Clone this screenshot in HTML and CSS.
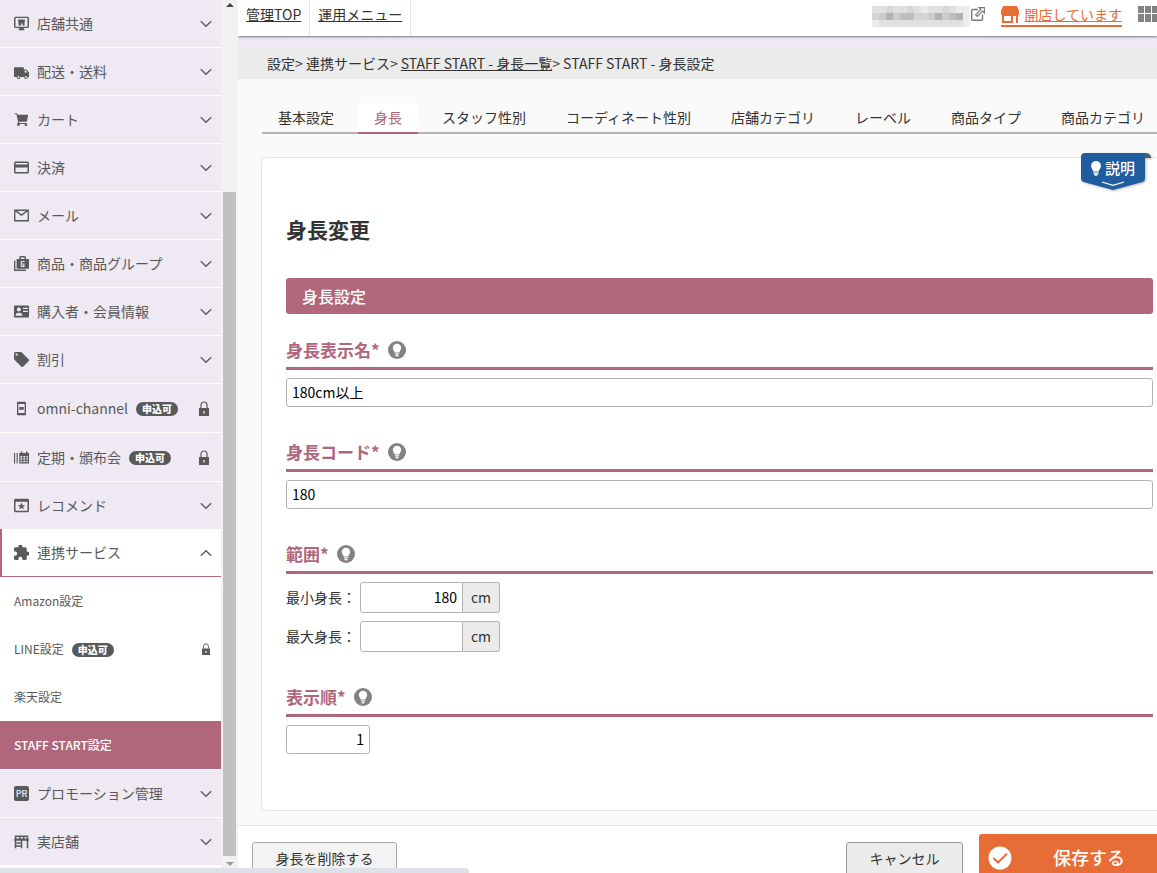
FILE: index.html
```html
<!DOCTYPE html>
<html lang="ja">
<head>
<meta charset="utf-8">
<title>STAFF START - 身長設定</title>
<link rel="stylesheet" href="styles.css">
</head>
<body>
<svg class="defs" aria-hidden="true">
  <symbol id="down" viewBox="0 0 12 8"><path d="M.8 1.2 6 6.3l5.200-5.100" fill="none" stroke="currentColor" stroke-width="1.300"/></symbol>
  <symbol id="up" viewBox="0 0 12 8"><path d="M.8 6.800 6 1.700l5.200 5.100" fill="none" stroke="currentColor" stroke-width="1.300"/></symbol>
  <symbol id="lock" viewBox="0 0 10 15"><path d="M2 7V4a3 3 0 0 1 6 0v3" fill="none" stroke="currentColor" stroke-width="1.200"/><path fill="currentColor" fill-rule="evenodd" d="M0 7h10v8H0zM4.300 10v2.500h1.400V10z"/></symbol>
  <symbol id="bulb" viewBox="0 0 18 18"><circle cx="9" cy="9" r="9" fill="#828282"/><path fill="#fff" d="M9 2.800a4.200 4.200 0 0 0-4.200 4.200c0 2 1.600 2.800 1.900 4.600h4.600c.3-1.800 1.900-2.600 1.900-4.600A4.200 4.200 0 0 0 9 2.800zM6.900 12.200h4.200v1H6.900zM7.400 13.800h3.200v.7L9.700 15.500H8.300l-.9-1z"/></symbol>
</svg>
<div class="app">
  <nav class="sidebar" aria-label="設定メニュー">
    <button class="item"><svg class="icon" viewBox="2 2 20 20"><path fill="currentColor" fill-rule="evenodd" d="M4 3h16q2 0 2 2v11q0 2-2 2h-5v1.500h1V21H8v-1.500h1V18H4q-2 0-2-2V5q0-2 2-2zm0 1.800v11.400h16V4.800zM7.500 6.500h9V10H16v4.500h-2.500V12h-2v2.500H8V10h-.5z"/></svg><span class="name">店舗共通</span><svg class="chev"><use href="#down"/></svg></button>
    <button class="item"><svg class="icon low" viewBox="2 2 20 20"><path fill="currentColor" fill-rule="evenodd" d="M3 5h12v3h3.500L22 12v6h-1.500a2.500 2.500 0 0 1-5 0h-5a2.500 2.500 0 0 1-5 0H2V6q0-1 1-1zm13 4.500V12h4l-2-2.500zM8 16.800a1.200 1.200 0 1 0 0 2.400 1.200 1.200 0 0 0 0-2.400zm10 0a1.200 1.200 0 1 0 0 2.400 1.200 1.200 0 0 0 0-2.400z"/></svg><span class="name">配送・送料</span><svg class="chev"><use href="#down"/></svg></button>
    <button class="item"><svg class="icon" viewBox="2 2 20 20"><path fill="currentColor" d="M3 3.500h3l1 2h14l-2 9.500H9l-.5 1.500H19V18H6.500l1-3L5.200 5H3z"/><circle cx="8" cy="19" r="1.800" fill="currentColor"/><circle cx="18" cy="19" r="1.800" fill="currentColor"/></svg><span class="name">カート</span><svg class="chev"><use href="#down"/></svg></button>
    <button class="item"><svg class="icon" viewBox="2 2 20 20"><path fill="currentColor" fill-rule="evenodd" d="M4 4h16q2 0 2 2v12q0 2-2 2H4q-2 0-2-2V6q0-2 2-2zm0 2v2h16V6zm0 6v6h16v-6z"/></svg><span class="name">決済</span><svg class="chev"><use href="#down"/></svg></button>
    <button class="item"><svg class="icon" viewBox="2 2 20 20"><path fill="none" stroke="currentColor" stroke-width="1.800" d="M3 5h18v14H3zM4 5.500l8 6 8-6"/></svg><span class="name">メール</span><svg class="chev"><use href="#down"/></svg></button>
    <button class="item"><svg class="icon" viewBox="2 2 20 20"><path fill="currentColor" fill-rule="evenodd" d="M2 8h1.800v12H18v2H2zM5.500 6H9V4q0-2 2-2h5q2 0 2 2v2h4v13H5.500zM11 4v2h5V4zm1 4.500q-1 0-1 1v6q0 1 1 1h4V12h-3v1.300h1.500V15h-2v-5H16V8.500z"/></svg><span class="name">商品・商品グループ</span><svg class="chev"><use href="#down"/></svg></button>
    <button class="item"><svg class="icon" viewBox="2 2 20 20"><path fill="currentColor" fill-rule="evenodd" d="M3 4h18q1 0 1 1v14q0 1-1 1H3q-1 0-1-1V5q0-1 1-1zm5.500 2.500a2.700 2.700 0 1 0 0 5.400 2.700 2.700 0 0 0 0-5.400zM4 17.500h9.500q-.5-4-5-4t-4.500 4zM14 7v1.500h6.500V7zm0 4v1.500h6.500V11z"/></svg><span class="name">購入者・会員情報</span><svg class="chev"><use href="#down"/></svg></button>
    <button class="item"><svg class="icon" viewBox="2 2 20 20"><path fill="currentColor" fill-rule="evenodd" d="M21.400 11.600l-9-9C12 2.200 11.500 2 11 2H4a2 2 0 0 0-2 2v7c0 .5.2 1 .6 1.400l9 9a2 2 0 0 0 2.800 0l7-7a2 2 0 0 0 0-2.800zM5.500 7a1.500 1.500 0 1 1 0-3 1.500 1.500 0 0 1 0 3z"/></svg><span class="name">割引</span><svg class="chev"><use href="#down"/></svg></button>
    <button class="item locked"><svg class="icon" viewBox="2 2 20 20"><path fill="currentColor" fill-rule="evenodd" d="M7 3h10q1 0 1 1v16q0 1-1 1H7q-1 0-1-1V4q0-1 1-1zm.8 3v12h8.400V6zM9 10h6v3.500H9z"/></svg><span class="name">omni-channel</span><span class="tag">申込可</span><svg class="lock"><use href="#lock"/></svg></button>
    <button class="item locked"><svg class="icon" viewBox="2 2 20 20"><path fill="currentColor" fill-rule="evenodd" d="M2 6h1.500v14H2zM5.500 6H7v14H5.500zM9 6h2V4h2v2h5V4h2v2h2v14H9zm1.500 4v2H13v-2zm4 0v2H17v-2zm4 0v2h2v-2zm-8 3v2H13v-2zm4 0v2H17v-2zm4 0v2h2v-2zm-8 3.200v2H13v-2zm4 0v2H17v-2zm4 0v2h2v-2z"/></svg><span class="name">定期・頒布会</span><span class="tag">申込可</span><svg class="lock"><use href="#lock"/></svg></button>
    <button class="item flat"><svg class="icon" viewBox="2 2 20 20"><path fill="currentColor" fill-rule="evenodd" d="M4 3h16q2 0 2 2v14q0 2-2 2H4q-2 0-2-2V5q0-2 2-2zm0 4v12h16V7zm8 1l1.300 3.300 3.500.2-2.700 2.200.9 3.400-3-1.900-3 1.900.9-3.400-2.700-2.200 3.500-.2z"/></svg><span class="name">レコメンド</span><svg class="chev"><use href="#down"/></svg></button>
    <button class="item open" aria-expanded="true"><svg class="icon" viewBox="2 2 20 20"><path fill="currentColor" d="M20.500 11H19V7a2 2 0 0 0-2-2h-4V3.500a2.500 2.500 0 0 0-5 0V5H4a2 2 0 0 0-2 2v3.800h1.500a2.700 2.700 0 0 1 0 5.400H2V20a2 2 0 0 0 2 2h3.800v-1.500a2.700 2.700 0 0 1 5.400 0V22H17a2 2 0 0 0 2-2v-4h1.500a2.500 2.500 0 0 0 0-5z"/></svg><span class="name">連携サービス</span><svg class="chev"><use href="#up"/></svg></button>
    <a class="sub" href="#">Amazon設定</a>
    <a class="sub" href="#">LINE設定<span class="tag">申込可</span><svg class="lock small"><use href="#lock"/></svg></a>
    <a class="sub" href="#">楽天設定</a>
    <a class="sub current" href="#" aria-current="page">STAFF START設定</a>
    <button class="item first"><span class="icon pr">PR</span><span class="name">プロモーション管理</span><svg class="chev"><use href="#down"/></svg></button>
    <button class="item"><svg class="icon" viewBox="2 2 20 20"><path fill="currentColor" fill-rule="evenodd" d="M3 4h18v5h1v2h-1v10h-2V11h-6v10h-2v-2H5v2H3V11H2V9h1zm2 2v2h4V6zm6 0v2h3V6zm5 0v2h3V6zM5 11v6h6v-6z"/><path fill="currentColor" d="M5 13h6v2H5z"/></svg><span class="name">実店舗</span><svg class="chev"><use href="#down"/></svg></button>
  </nav>
  <div class="track" aria-hidden="true"><i class="arrow-up"></i><i class="thumb"></i><i class="arrow-down"></i></div>
  <main class="main">
    <header class="top">
      <nav class="links"><a href="#">管理TOP</a><a href="#">運用メニュー</a></nav>
      <div class="tools">
        <svg class="mask" viewBox="0 0 98 21" shape-rendering="crispEdges"><path fill="#e0e0e0" d="M0 0h98v21H0z"/><path fill="#ececec" d="M91 0h7v21h-7zM0 14h7v7H0zM49 0h7v7h-7zM84 0h7v7h-7z"/><path fill="#d7d7d7" d="M14 0h7v7h-7zM35 0h7v7h-7zM70 0h7v7h-7z"/><path fill="#ccc" d="M0 7h91v7H0z"/><path fill="#d5d5d5" d="M42 7h14v7H42zM0 7h7v7H0z"/><path fill="#bebebe" d="M28 7h14v7H28zM77 7h7v7h-7z"/><path fill="#b2b2b2" d="M14 7h7v7h-7zM63 7h7v7h-7zM84 7h7v7h-7z"/></svg>
        <svg class="ext" viewBox="0 0 14 14"><path d="M7 2.500H1.700q-1 0-1 1v8.800q0 1 1 1h8.800q1 0 1-1V7.500" fill="none" stroke="#777" stroke-width="1.400"/><path d="M8 .6h5.400V6l-1.900-1.900-5.300 5.300-1.600-1.600 5.300-5.300z" fill="#fff" stroke="#777" stroke-width="1.100"/></svg>
        <a class="shop" href="#"><svg viewBox="0 0 18 17"><path fill="currentColor" fill-rule="evenodd" d="M2 0h14l2 5v3.500l-1 1V17h-2V10h-3v7H1V9.500l-1-1V5zM3 10v5h7v-5z"/></svg><span>開店しています</span></a>
        <svg class="apps" viewBox="0 0 19 16"><path fill="#828282" d="M0 0h6v7H0zM7 0h6v7H7zM14 0h5v7h-5zM0 8h6v8H0zM7 8h6v8H7zM14 8h5v8h-5z"/></svg>
      </div>
    </header>
    <nav class="crumbs" aria-label="パンくず">設定&gt; 連携サービス&gt; <a href="#">STAFF START - 身長一覧</a>&gt; STAFF START - 身長設定</nav>
    <nav class="tabs"><a href="#">基本設定</a><a class="on" href="#">身長</a><a href="#">スタッフ性別</a><a href="#">コーディネート性別</a><a href="#">店舗カテゴリ</a><a href="#">レーベル</a><a href="#">商品タイプ</a><a href="#">商品カテゴリ</a></nav>
    <section class="card">
      <button class="help">
        <svg class="help-bg" viewBox="0 0 72 40"><path fill="#595959" d="M62 0h4q4 1 4 5h-8z"/><path fill="#205ca0" d="M4 0h60v26q0 2-2.500 3L32 37 2.500 29Q0 28 0 26V4q0-4 4-4z"/><path d="M21 29l11 3.300L43 29" fill="none" stroke="#fff" stroke-width="1.300"/></svg>
        <svg class="help-bulb" viewBox="0 0 10 15"><path fill="#fff" d="M5 0a5 5 0 0 0-5 5c0 2.200 2 3.200 2.200 5.500h5.600C8 8.200 10 7.200 10 5a5 5 0 0 0-5-5z"/><path fill="#c8d8ea" d="M2.500 11h5v2L6 15H4l-1.500-2z"/></svg><span>説明</span>
      </button>
      <h1>身長変更</h1>
      <h2>身長設定</h2>
      <div class="field"><h3><label for="name">身長表示名*</label><svg><use href="#bulb"/></svg></h3><input id="name" type="text" value="180cm以上"></div>
      <div class="field"><h3><label for="code">身長コード*</label><svg><use href="#bulb"/></svg></h3><input id="code" type="text" value="180"></div>
      <div class="field"><h3>範囲*<svg><use href="#bulb"/></svg></h3>
        <div class="range"><label for="min">最小身長：</label><input id="min" type="text" value="180"><span>cm</span></div>
        <div class="range"><label for="max">最大身長：</label><input id="max" type="text" value=""><span>cm</span></div>
      </div>
      <div class="field"><h3><label for="order">表示順*</label><svg><use href="#bulb"/></svg></h3><input class="short" id="order" type="text" value="1"></div>
    </section>
    <footer class="actions">
      <button class="delete">身長を削除する</button>
      <button class="cancel">キャンセル</button>
      <button class="save"><svg viewBox="0 0 24 24"><circle cx="12" cy="12" r="11.500" fill="#fff"/><path d="M5.500 12l4.500 4.500 9-9" fill="none" stroke="#e76c35" stroke-width="2"/></svg><span>保存する</span></button>
    </footer>
  </main>
</div>
<div class="status" aria-hidden="true"></div>
</body>
</html>
```
FILE: styles.css
```css
* { box-sizing: border-box; }
body {
  margin: 0;
  height: 100vh;
  overflow: hidden;
  background: #fafafa;
  color: #333;
  font: 14px/20px "Noto Sans CJK JP", sans-serif;
}
a { color: inherit; }
button, input { font: inherit; color: inherit; }
svg { display: block; flex: none; }
.defs { position: absolute; width: 0; height: 0; }
.app { display: grid; grid-template-columns: 221px 17px minmax(0, 1fr); height: 100vh; }

.sidebar { display: flex; flex-direction: column; overflow: hidden; background: #fff; color: #595959; }
.item {
  display: flex;
  flex: none;
  align-items: center;
  height: 48px;
  padding: 0 9px 0 14px;
  border: 0;
  border-bottom: 1px solid #fff;
  background: #eee9f3;
  text-align: left;
}
.icon { width: 15px; height: 15px; margin-right: 8px; }
.low { margin-top: 2px; }
.name { padding-bottom: 1px; }
.pr { border-radius: 2px; background: #595959; color: #eee9f3; font-size: 9px; font-weight: 500; line-height: 15px; text-align: center; }
.chev { width: 12px; height: 8px; margin-left: auto; }
.locked { height: 49px; padding-right: 12px; }
.flat { height: 47px; border-bottom: 0; }
.first { height: 49px; border-top: 1px solid #fff; }
.open { padding-left: 12px; border-left: 2px solid #b0677b; border-bottom-color: #b0677b; background: #fff; }
.tag {
  width: 42px;
  margin: 2px 0 0 8px;
  border-radius: 7px;
  background: #595959;
  color: #fff;
  font-size: 10px;
  font-weight: 900;
  line-height: 14px;
  text-align: center;
}
.lock { width: 10px; height: 15px; margin-left: auto; }
.small { width: 8px; height: 12px; }
.sub {
  display: flex;
  flex: none;
  align-items: center;
  height: 48px;
  padding: 0 11px 0 14px;
  font-size: 12px;
  text-decoration: none;
}
.current { background: #b0677b; color: #fff; font-weight: 500; }

.track { display: flex; flex-direction: column; align-items: center; padding: 3px 0 7px; background: #f1f1f1; }
.arrow-up { border: 4px solid transparent; border-top: 0; border-bottom-color: #444; }
.thumb { width: 13px; height: 664px; margin: auto 0 6px; background: #c1c1c1; }
.arrow-down { border: 4px solid transparent; border-bottom: 0; border-top-color: #999; }

.main { display: flex; flex-direction: column; min-width: 0; overflow: hidden; }
.top { display: flex; flex: none; justify-content: space-between; height: 36px; background: #fff; box-shadow: 0 1px 2px #777; z-index: 1; }
.links { display: flex; }
.links a { padding: 4px 8px 0; border-right: 1px solid #e5e5e5; }
.tools { display: flex; align-items: flex-start; padding-top: 6px; }
.mask { width: 98px; height: 21px; }
.ext { width: 14px; height: 14px; margin: 1px 16px 0 1px; }
.shop { display: flex; gap: 5px; height: 21px; border-bottom: 2px solid #e76c35; color: #e76c35; text-decoration: none; }
.shop svg { width: 18px; height: 17px; }
.shop span { line-height: 16px; text-decoration: underline; }
.apps { width: 19px; height: 16px; margin-left: 16px; }
.crumbs { flex: none; height: 43px; padding: 6px 29px 0; border-top: 11px solid #eee9f3; background: #ebebeb; }
.tabs { display: flex; flex: none; gap: 8px; margin: 24px 0 0 24px; border-bottom: 2px solid #b3b3b3; white-space: nowrap; }
.tabs a { margin-bottom: -2px; padding: 4px 16px 5px; border-bottom: 2px solid transparent; text-decoration: none; }
.tabs .on { border-color: #b0677b; background: #fff; color: #b0677b; }

.card {
  position: relative;
  flex: none;
  margin: 23px 0 0 23px;
  padding: 55px 4px 56px 24px;
  border: 1px solid #e6e6e6;
  border-right: 0;
  border-radius: 4px 0 0 4px;
  background: #fff;
}
h1, h2, h3 { margin: 0; }
h1 { font-size: 21px; line-height: 32px; }
h2 { margin: 33px 0 19px; padding: 0 16px; border-radius: 3px; background: #b0677b; color: #fff; font-size: 16px; font-weight: 500; line-height: 36px; }
h3 { display: flex; align-items: center; gap: 8px; margin-bottom: 8px; border-bottom: 3px solid #b0677b; color: #b0677b; font-size: 17px; line-height: 34px; }
h3 svg { width: 18px; height: 18px; }
.field + .field { margin-top: 28px; }
input { display: block; width: 100%; height: 29px; padding: 0 5px 2px; border: 1px solid #b3b3b3; border-radius: 3px; background: #fff; color: #000; }
.short { width: 84px; text-align: right; }
.range { display: flex; align-items: center; }
.range + .range { margin-top: 8px; }
.range label { margin-right: 4px; padding-bottom: 2px; }
.range input { width: 103px; height: 31px; border-radius: 3px 0 0 3px; text-align: right; }
.range span { width: 37px; border: 1px solid #b3b3b3; border-left: 0; border-radius: 0 3px 3px 0; background: #ebebeb; line-height: 29px; text-align: center; }
.help {
  position: absolute;
  top: -5px;
  right: 4px;
  display: flex;
  gap: 4px;
  width: 72px;
  height: 40px;
  padding: 5px 10px;
  border: 0;
  background: none;
  color: #fff;
  font-size: 15px;
  font-weight: 500;
}
.help-bg { position: absolute; top: 0; left: 0; width: 72px; height: 40px; filter: drop-shadow(1px 1px 1px #bbb); }
.help-bulb { position: relative; width: 10px; height: 15px; margin-top: 3px; }
.help span { position: relative; }

.actions { display: flex; flex: none; gap: 16px; margin-top: 14px; padding: 8px 0 8px 14px; border-top: 1px solid #e6e6e6; background: #fff; }
.actions button { height: 34px; margin-top: 8px; padding: 0 0 2px; border: 1px solid #aaa; border-radius: 3px; }
.actions .delete { width: 145px; margin-right: auto; background: #f3f3f3; }
.actions .cancel { width: 117px; border-color: #999; background: #ebebeb; }
.actions .save { display: flex; align-items: center; width: 178px; height: 48px; margin-top: 0; padding: 0 9px; border: 0; border-radius: 3px 0 0 3px; background: #e76c35; color: #fff; font-size: 18px; font-weight: 500; }
.save svg { width: 24px; height: 24px; }
.save span { margin-left: 41px; padding-bottom: 2px; }
.status { position: fixed; left: 0; bottom: 0; z-index: 2; width: 469px; height: 5px; border-top-right-radius: 4px; background: #dee1e6; }
```
